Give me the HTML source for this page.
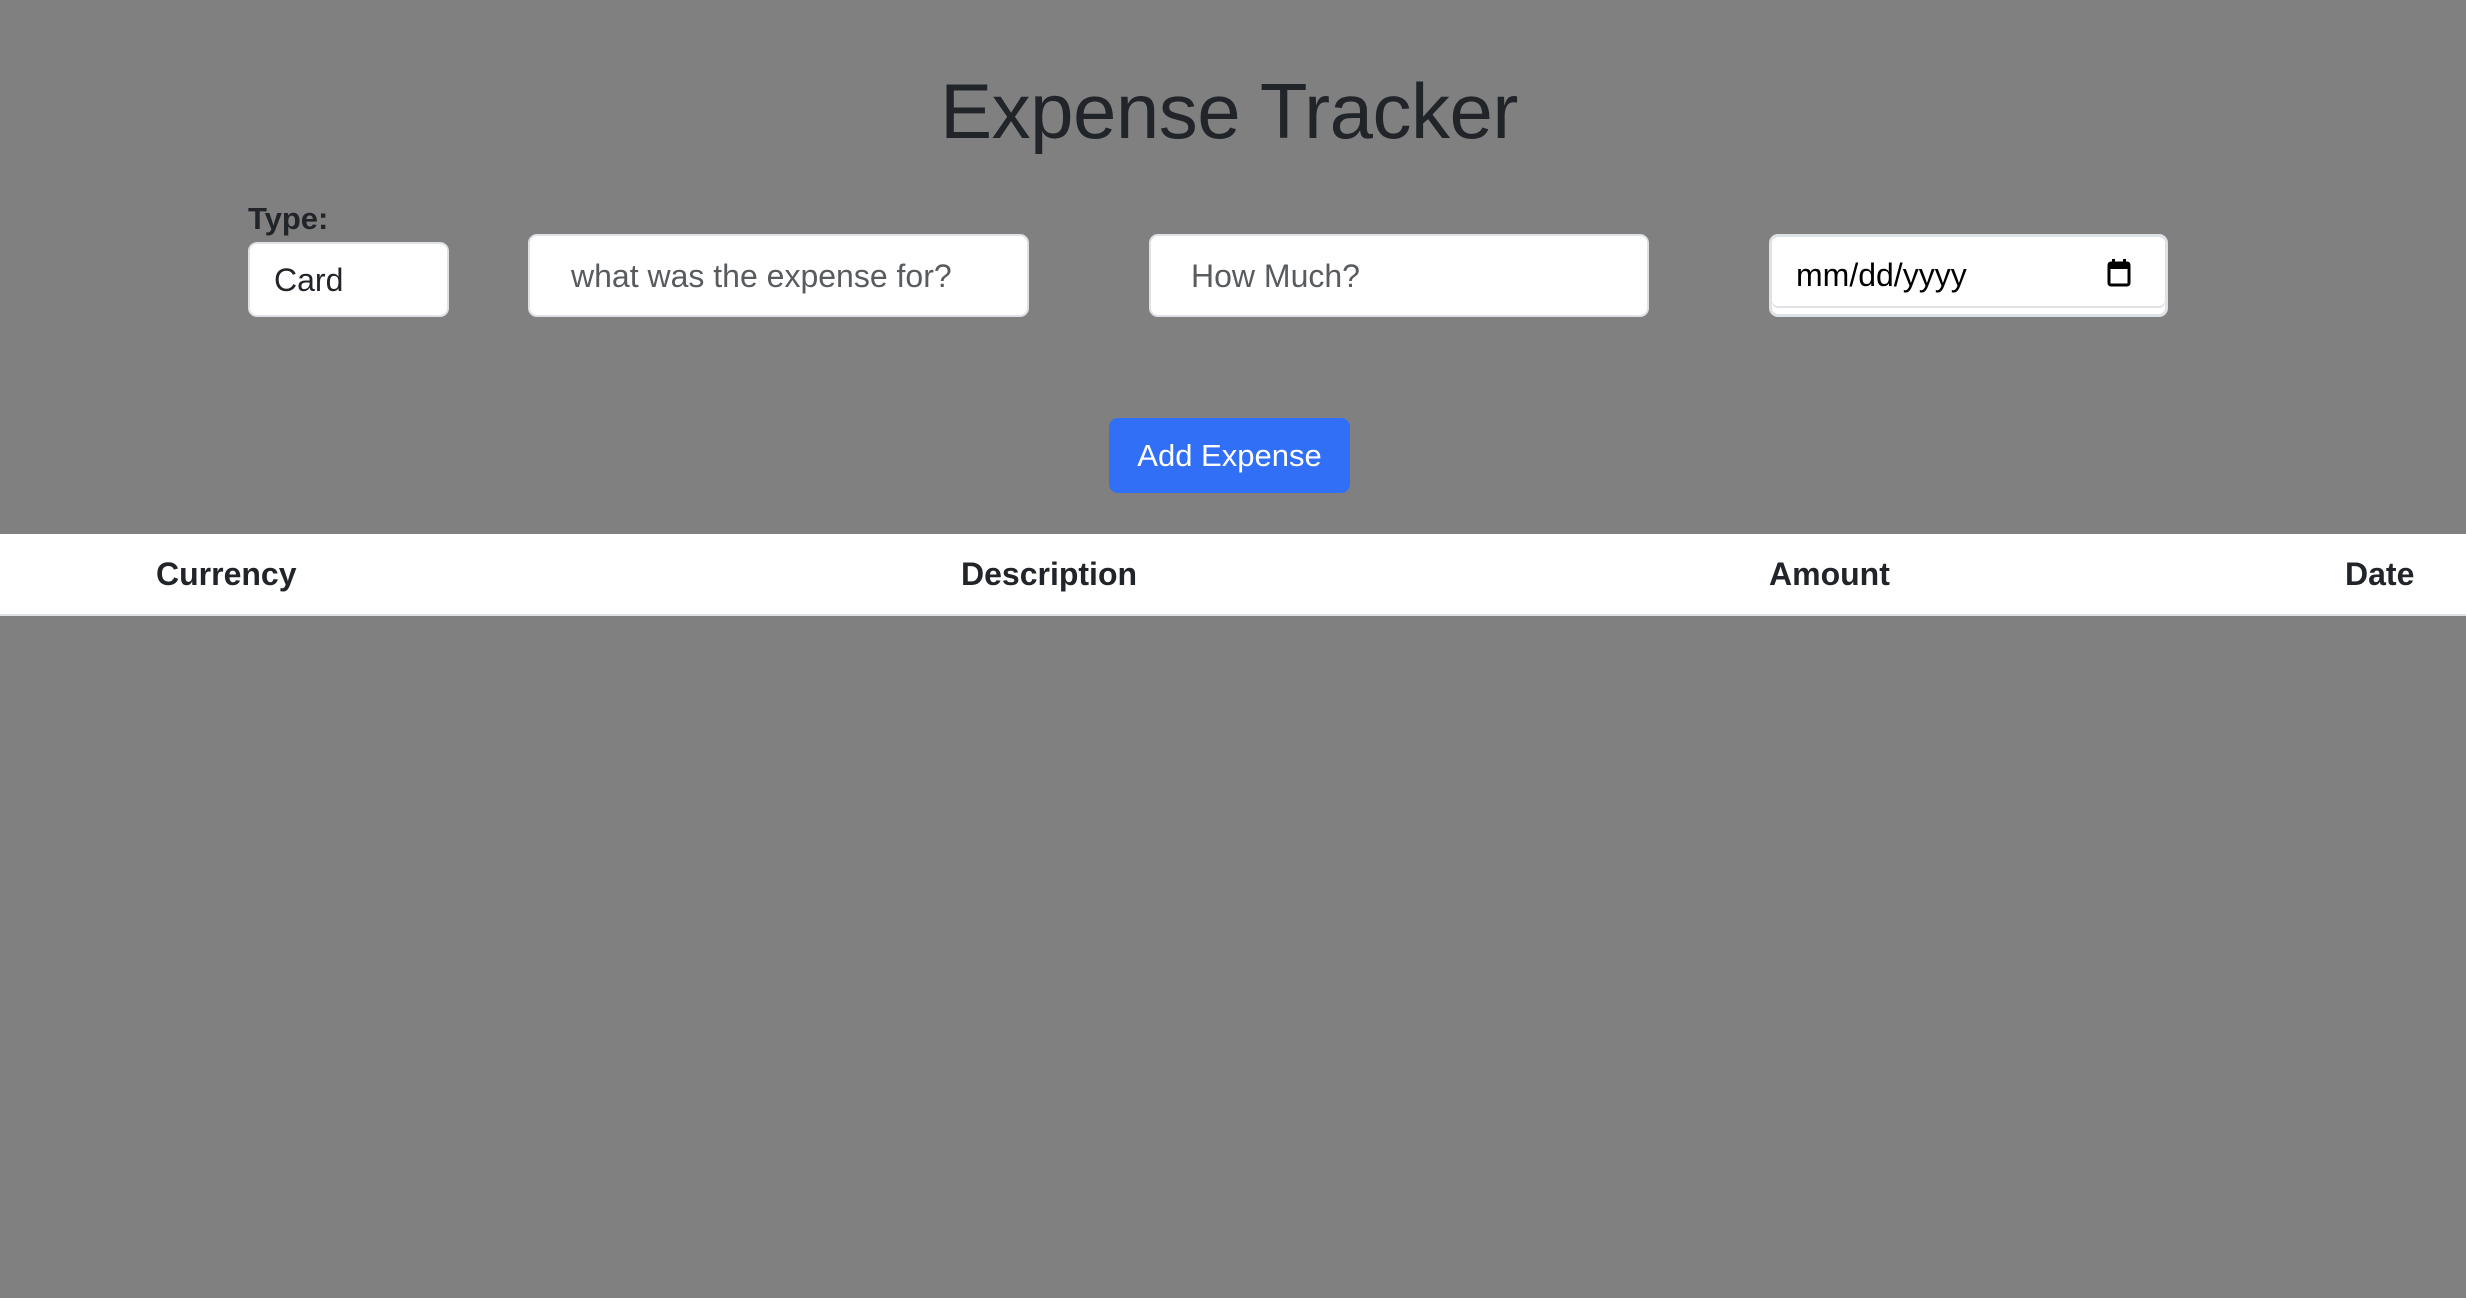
<!DOCTYPE html>
<html><head><meta charset="utf-8"><style>
html,body{margin:0;padding:0;width:2466px;height:1298px;background:#808080;overflow:hidden;font-family:"Liberation Sans",sans-serif;color:#212529}
.a{position:absolute}
.box{position:absolute;background:#fff;border:2px solid #dee2e6;border-radius:9px;box-sizing:border-box}
.ph{position:absolute;font-size:32px;color:#595c5f;white-space:nowrap}
.th{position:absolute;font-size:32px;font-weight:bold;top:556px;white-space:nowrap}
</style></head><body>
<div class="a" style="left:0;width:2458px;top:61px;text-align:center;font-size:78px;line-height:100px;letter-spacing:-0.5px">Expense Tracker</div>
<div class="a" style="left:248px;top:201px;font-size:31px;font-weight:bold">Type:</div>
<div class="box" style="left:248px;top:242px;width:201px;height:75px"></div>
<div class="ph" style="left:274px;top:262px;color:#212529">Card</div>
<div class="box" style="left:528px;top:234px;width:501px;height:83px"></div>
<div class="ph" style="left:571px;top:258px">what was the expense for?</div>
<div class="box" style="left:1149px;top:234px;width:500px;height:83px"></div>
<div class="ph" style="left:1191px;top:258px">How Much?</div>
<div class="box" style="left:1769px;top:234px;width:399px;height:83px;border:3px solid #dee2e6;box-shadow:inset 0 -6px 0 #fff,inset 0 -8px 0 #dee2e6"></div>
<div class="ph" style="left:1796px;top:257px;color:#000">mm/dd/yyyy</div>
<svg class="a" style="left:2107px;top:258px" width="24" height="30" viewBox="0 0 24 30"><rect x="2" y="5" width="20" height="22" rx="2" fill="none" stroke="#000" stroke-width="3"/><rect x="2" y="5" width="20" height="6" fill="#000"/><rect x="5" y="1" width="3" height="5" fill="#000"/><rect x="16" y="1" width="3" height="5" fill="#000"/></svg>
<div class="a" style="left:1109px;top:418px;width:241px;height:75px;background:#316ff6;border-radius:9px;color:#fff;font-size:31px;text-align:center;line-height:75px">Add Expense</div>
<div class="a" style="left:0;top:534px;width:2466px;height:80px;background:#fff;border-bottom:2px solid #dee2e6"></div>
<div class="th" style="left:156px">Currency</div>
<div class="th" style="left:961px">Description</div>
<div class="th" style="left:1769px">Amount</div>
<div class="th" style="left:2345px">Date</div>
</body></html>
